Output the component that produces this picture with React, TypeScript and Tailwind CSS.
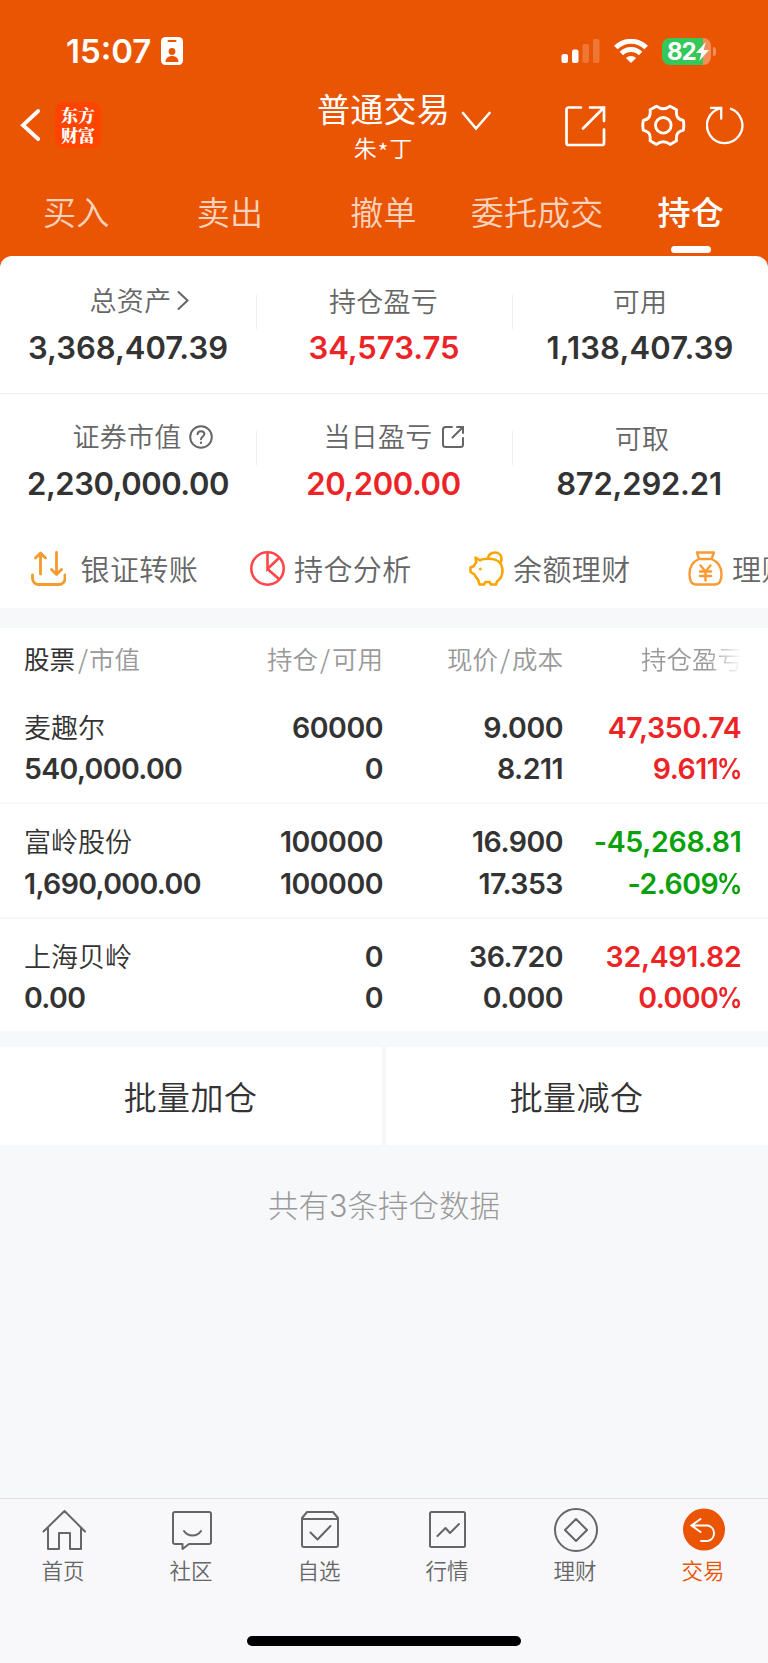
import type { ReactNode } from "react";
import clsx from "clsx";

const tabs = ["买入", "卖出", "撤单", "委托成交", "持仓"];

type Holding = {
  name: string;
  value: string;
  amount: string;
  available: string;
  price: string;
  cost: string;
  profit: string;
  rate: string;
  down?: boolean;
};

const holdings: Holding[] = [
  { name: "麦趣尔", value: "540,000.00", amount: "60000", available: "0", price: "9.000", cost: "8.211", profit: "47,350.74", rate: "9.611" },
  { name: "富岭股份", value: "1,690,000.00", amount: "100000", available: "100000", price: "16.900", cost: "17.353", profit: "-45,268.81", rate: "-2.609", down: true },
  { name: "上海贝岭", value: "0.00", amount: "0", available: "0", price: "36.720", cost: "0.000", profit: "32,491.82", rate: "0.000" },
];

function StatusBar() {
  return (
    <div className="flex h-[88px] items-start pt-[31px]">
      <div className="ml-[66px] w-[95px] font-['Inter'] text-[33px] leading-[41px] font-semibold">15:07</div>
      <svg width="22" height="28" viewBox="0 0 22 28" className="mt-[6px]">
        <rect width="22" height="28" rx="4.5" fill="#fff" />
        <rect x="6.5" y="3" width="9" height="2" rx="1" fill="#ea5504" />
        <circle cx="11" cy="14.5" r="3.4" fill="#ea5504" />
        <path d="M4.5 25c0-4 3-6 6.500-6s6.500 2 6.500 6z" fill="#ea5504" />
      </svg>
      <svg width="39" height="25" viewBox="0 0 39 25" fill="#fff" className="mt-[8px] ml-[378px]">
        <rect x="0.500" y="15" width="6.500" height="9" rx="2" />
        <rect x="11" y="10.500" width="6.500" height="13.500" rx="2" />
        <rect x="21.500" y="5" width="6.500" height="19" rx="2" opacity="0.2" />
        <rect x="32" y="0" width="6.500" height="24" rx="2" opacity="0.2" />
      </svg>
      <svg width="34" height="25" viewBox="0 0 34 25" className="mt-[8px] ml-[14px]" fill="none" stroke="#fff" strokeWidth="5">
        <path d="M1.800 8.600a21.500 21.500 0 0 1 30.400 0" />
        <path d="M7.400 14.600a13.500 13.500 0 0 1 19.200 0" />
        <path d="M11.900 19a7.300 7.300 0 0 1 10.200 0L17 24z" fill="#fff" stroke="none" />
      </svg>
      <div className="mt-[6.5px] ml-[14px] flex items-center">
        <div className="flex h-[27px] w-[49px] items-center rounded-[8px] bg-[linear-gradient(90deg,#34c759_84%,#f28f58_84%)] pl-[5px]">
          <span className="font-['Inter'] text-[24px] leading-[27px] font-bold tracking-[-1px]">82</span>
          <svg width="13" height="19" viewBox="0 0 12 18" preserveAspectRatio="none">
            <path d="M9 0L0 10.500h5L3 18 12 7.500H7z" fill="#fff" />
          </svg>
        </div>
        <div className="ml-[2px] h-[9px] w-[3px] rounded-r-full bg-[#f28f58]" />
      </div>
    </div>
  );
}

function NavBar() {
  return (
    <div className="flex h-[76px]">
      <div className="flex w-[304px] items-start pl-[20px]">
        <svg width="22" height="36" viewBox="0 0 22 36" fill="none" stroke="#fff" strokeWidth="3.800" strokeLinecap="round" className="mt-[19px]">
          <path d="M18.200 4L3 18.200 18.200 32" />
        </svg>
        <div className="mt-[14px] ml-[13px] h-[46px] w-[46px] rounded-[9px] bg-[#ff4400] pt-[3px] text-center font-['Noto_Serif_CJK_SC','Noto_Sans_CJK_SC',serif] text-[17px] leading-[20px] font-black">
          东方
          <br />
          财富
        </div>
      </div>
      <div className="w-[157px] text-center">
        <div className="pl-[2px] text-[33px] leading-[40px] tracking-[0.2px]">普通交易</div>
        <div className="-mt-px pl-px text-[23px] leading-[40px] font-[350]">
          朱<span className="relative top-[4px] mx-px">*</span>丁
        </div>
      </div>
      <svg width="30" height="22" viewBox="0 0 30 22" fill="none" stroke="#fff" strokeWidth="2.600" strokeLinecap="round" className="mt-[22px]">
        <path d="M2 3l13 15.500L28.500 3" />
      </svg>
      <svg width="43" height="42" viewBox="0 0 43 42" fill="none" stroke="#fff" strokeWidth="2.700" className="mt-[17px] ml-[72.5px]">
        <path d="M17 2.500H4.500a2 2 0 0 0-2 2V38a2 2 0 0 0 2 2H38a2 2 0 0 0 2-2V24.500M26 2.500h14V16M40 2.500L19 23.500" strokeLinecap="round" />
      </svg>
      <svg width="45" height="44" viewBox="0 0 45 44" fill="none" stroke="#fff" strokeWidth="2.900" strokeLinejoin="round" className="mt-[16px] ml-[34.5px]">
        <path d="M15.500 2.200Q22.300 7.500 29.100 2.200L35.500 5.800C34.800 12.500 36.500 15 42.300 16.500Q43.300 21.300 42.300 26.100C36.500 27.600 34.800 30.100 35.500 36.800L29.100 40.400Q22.300 35.100 15.500 40.400L9.100 36.800C9.800 30.100 8.100 27.600 2.300 26.100Q1.300 21.300 2.300 16.500C8.100 15 9.800 12.500 9.100 5.800Z" />
        <circle cx="22.300" cy="21.300" r="7.800" />
      </svg>
      <svg width="40" height="42" viewBox="0 0 40 42" fill="none" stroke="#fff" strokeWidth="2.300" className="mt-[16px] ml-[20px]">
        <path d="M24 4.500a17.700 17.700 0 1 1-10-0.200M4 3.800h11.200V15.500" />
      </svg>
    </div>
  );
}

function Tabs() {
  return (
    <div className="grid h-[92px] grid-cols-5 pt-[27px]">
      {tabs.map((tab) => {
        const active = tab === "持仓";
        return (
          <div key={tab} className="flex flex-col items-center">
            <span className={clsx("pr-px text-[33px] leading-[40px] tracking-[0.2px] whitespace-nowrap", active ? "font-medium" : "font-[350] text-[#fbd3bc]")}>{tab}</span>
            {active && <span className="mt-[15px] h-[7px] w-[40px] rounded-full bg-white" />}
          </div>
        );
      })}
    </div>
  );
}

type StatProps = {
  label: string;
  value: string;
  red?: boolean;
  icon?: ReactNode;
  labelClass?: string;
  valueClass?: string;
};

function Stat({ label, value, red, icon, labelClass, valueClass }: StatProps) {
  return (
    <div className="w-[256px] text-center">
      <div className={clsx("flex h-[36px] items-center justify-center text-[27px] leading-[36px] font-[350] tracking-[0.3px] text-[#666]", labelClass)}>
        {label}
        {icon}
      </div>
      <div className={clsx("mt-[11px] font-['Inter'] text-[31px] leading-[38px] font-semibold", red ? "text-[#ec2426]" : "text-[#333]", valueClass)}>{value}</div>
    </div>
  );
}

function Divider() {
  return <div className="mt-[13px] -mr-px h-[34px] w-px shrink-0 bg-[#eee]" />;
}

function Summary() {
  return (
    <div className="h-[352px] overflow-hidden rounded-t-[12px] bg-white">
      <div className="flex h-[138px] border-b border-[#f0f0f0] pt-[26px]">
        <Stat
          label="总资产"
          value="3,368,407.39"
          labelClass="pl-[24px]"
          icon={
            <svg width="14" height="22" viewBox="0 0 14 22" fill="none" stroke="#666" strokeWidth="2" strokeLinecap="round" className="ml-[5px]">
              <path d="M2.500 3l9 8.500-9 8.500" />
            </svg>
          }
        />
        <Divider />
        <Stat label="持仓盈亏" value="34,573.75" red labelClass="relative top-px pr-px" />
        <Divider />
        <Stat label="可用" value="1,138,407.39" labelClass="relative top-px" valueClass="tracking-[0.15px]" />
      </div>
      <div className="flex h-[138px] pt-[24px]">
        <Stat
          label="证券市值"
          value="2,230,000.00"
          labelClass="pl-[29px]"
          valueClass="tracking-[-0.45px]"
          icon={
            <svg width="24" height="24" viewBox="0 0 24 24" fill="none" stroke="#666" strokeWidth="2" strokeLinecap="round" className="mt-px ml-[7px]">
              <circle cx="12" cy="12" r="10.800" />
              <path d="M8.600 9.300c.1-2 1.500-3.100 3.400-3.100s3.400 1.200 3.400 2.900c0 2.300-3.400 2.500-3.400 5.100" />
              <path d="M12 17.600v.2" strokeWidth="2.400" />
            </svg>
          }
        />
        <Divider />
        <Stat
          label="当日盈亏"
          value="20,200.00"
          red
          labelClass="pl-[20px]"
          valueClass="pr-px tracking-[-0.4px]"
          icon={
            <svg width="24" height="24" viewBox="0 0 24 24" fill="none" stroke="#666" strokeWidth="2" strokeLinecap="round" className="mt-px ml-[8px]">
              <path d="M11 2H4.500A2.500 2.500 0 0 0 2 4.500v15A2.500 2.500 0 0 0 4.500 22h15a2.500 2.500 0 0 0 2.500-2.500V13M16 2h6v6M22 2L11.500 12.500" />
            </svg>
          }
        />
        <Divider />
        <Stat label="可取" value="872,292.21" labelClass="relative top-[2px] pl-[4px]" valueClass="pr-[2px] tracking-[-0.2px]" />
      </div>
      <div className="flex h-[76px] gap-[14px] pl-[30.5px] text-[29px] leading-[72px] font-[350] tracking-[0.4px] whitespace-nowrap text-[#666]">
        <Shortcut label="银证转账" wide>
          <g stroke="#f59a2c" strokeWidth="2.800" strokeLinecap="round" strokeLinejoin="round">
            <path d="M1.500 24v3.500a6 6 0 0 0 6 6h20.500a6 6 0 0 0 6-6V24M9.500 23V2.500M4.500 7l5-5 5 5M25.500 1.500V23M20.500 18.500l5 5 5-5" />
          </g>
        </Shortcut>
        <Shortcut label="持仓分析">
          <g stroke="#ff4648" strokeWidth="2.600">
            <circle cx="17.500" cy="17.500" r="16.200" />
            <path d="M17.500 1.500V18L29.500 6.500M17.500 18L29.500 28.500" />
          </g>
        </Shortcut>
        <Shortcut label="余额理财">
          <g stroke="#fba500" strokeWidth="2.600" strokeLinejoin="round">
            <path d="M6.500 6.500l4.500 2.800C13 8 16 7.800 20 7.800c9 0 13.500 5.200 13.500 12.200 0 5-2 8-5.500 10.500L27 33.500h-5l-1.500-2.500h-4L15 33.500h-4.500L9 28.500C7.500 27 6.500 25.500 5.500 23.500L1.500 21v-4.500L5 15c.5-1.500 1-2.500 2.300-3.500z" />
            <path d="M18.500 8c1-4 4-6.500 7.500-6.500 4 0 6.500 3 6.500 6.500 0 2-1 3.500-2.500 4.500" />
            <circle cx="11.300" cy="18" r="1" fill="#fba500" strokeWidth="1" />
          </g>
        </Shortcut>
        <Shortcut label="理财产品">
          <g stroke="#f99a34" strokeWidth="2.400" strokeLinejoin="round" strokeLinecap="round">
            <path d="M11 8L9 1.500h17L23.500 8zM11 8C5 10.500 1.500 16 1.500 23c0 7 2 10.500 6.500 10.500h19c4.500 0 6.500-3.500 6.500-10.500 0-7-4-12.500-10-15" />
            <path d="M12.500 14.500l5 6 5-6M17.500 20.500v9M12 20.500h11M12 25h11" />
          </g>
        </Shortcut>
      </div>
    </div>
  );
}

function Shortcut({ label, wide, children }: { label: string; wide?: boolean; children: ReactNode }) {
  return (
    <div className="flex w-[205px] shrink-0">
      <svg width="35" height="35" viewBox="0 0 35 35" fill="none" className={clsx("mt-[19px] shrink-0", wide ? "mr-[15px]" : "mr-[9.5px]")}>
        {children}
      </svg>
      {label}
    </div>
  );
}

function Holdings() {
  const columns = "grid grid-cols-[170px_189px_180px_179.5px] pl-[24px]";
  return (
    <div className="mt-[20px] bg-white text-[#333]">
      <div className={clsx(columns, "h-[61.5px] pt-[10px] text-[25.5px] leading-[40px] font-[350] whitespace-nowrap text-[#999]")}>
        <div>
          <span className="font-normal text-[#333]">股票</span>
          <span className="mr-[1px] ml-[3px]">/</span>市值
        </div>
        <div className="text-right">
          持仓<span className="mx-[2px]">/</span>可用
        </div>
        <div className="text-right">
          现价<span className="mx-[2px]">/</span>成本
        </div>
        <div className="ml-[78px] w-[101px] overflow-hidden bg-linear-to-r from-[#999] from-65% to-white bg-clip-text text-transparent">持仓盈亏</div>
      </div>
      {holdings.map((h) => (
        <div
          key={h.name}
          className={clsx(
            columns,
            "h-[114.5px] border-b-2 border-[#f8f8f9] pt-[17px] font-['Inter'] text-[28.5px] leading-[41.5px] font-semibold tracking-[-0.5px]",
            "last:h-[112px] last:border-b-0",
          )}
        >
          <div>
            <div className="relative -top-px font-['Noto_Sans_CJK_SC',sans-serif] text-[27px] font-[350] tracking-normal">{h.name}</div>
            <div className="tracking-[-0.65px]">{h.value}</div>
          </div>
          <div className="text-right">
            <div>{h.amount}</div>
            <div>{h.available}</div>
          </div>
          <div className="text-right">
            <div>{h.price}</div>
            <div>{h.cost}</div>
          </div>
          <div className={clsx("text-right", h.down ? "text-[#09a109]" : "text-[#ec2426]")}>
            <div className="pr-px tracking-[-0.3px]">{h.profit}</div>
            <div>
              {h.rate}
              <span className="-ml-[4px] inline-block origin-right scale-x-90">%</span>
            </div>
          </div>
        </div>
      ))}
    </div>
  );
}

function NavItem({ label, active, children }: { label: string; active?: boolean; children: ReactNode }) {
  return (
    <div className={clsx("flex flex-1 flex-col items-center text-[21.5px] leading-[30px] font-[350]", active ? "text-[#ea5504]" : "text-[#666]")}>
      <svg width="46" height="46" viewBox="0 0 46 46" fill="none" stroke="currentColor" strokeWidth="2" strokeLinejoin="round" strokeLinecap="round">
        {children}
      </svg>
      <span className="mt-[2px] mr-[2px]">{label}</span>
    </div>
  );
}

function BottomNav() {
  return (
    <div className="h-[165px] border-t border-[#dedee0] bg-[#f8f8fb]">
      <div className="flex pt-[8px]">
        <NavItem label="首页">
          <path d="M2.500 24.500L23.500 4 44 24.500M7 20.500V42h11V26h11v16h11V20.500" />
        </NavItem>
        <NavItem label="社区">
          <path d="M6 5h34a2 2 0 0 1 2 2v28a2 2 0 0 1-2 2H20l-6.500 5v-5H6a2 2 0 0 1-2-2V7a2 2 0 0 1 2-2zM15 24c4 6 13 6 17 0" />
        </NavItem>
        <NavItem label="自选">
          <path d="M5 11l5-6h26l5 6M5 12h36v26a2 2 0 0 1-2 2H7a2 2 0 0 1-2-2zM13.500 25.500l7 7L33.500 19" />
        </NavItem>
        <NavItem label="行情">
          <rect x="5" y="5" width="35" height="35" rx="1.500" />
          <path d="M12.500 29l8-8 4.500 5 9-9" />
        </NavItem>
        <NavItem label="理财">
          <circle cx="23" cy="23" r="21" />
          <path d="M23 12l11 11-11 11-11-11z" />
        </NavItem>
        <NavItem label="交易" active>
          <circle cx="23" cy="22.500" r="21" fill="#ea5504" stroke="none" />
          <path d="M19.500 12L10.500 18.500l9 6.500M11 18.500h16a8 8 0 0 1 0 15.500h-7" stroke="#fff" strokeWidth="2" strokeLinejoin="miter" />
        </NavItem>
      </div>
      <div className="mx-auto mt-[51px] h-[10px] w-[274px] rounded-full bg-black" />
    </div>
  );
}

function App() {
  return (
    <div className="flex h-[1663px] w-[768px] flex-col overflow-hidden bg-[#f7f8fa] font-['Noto_Sans_CJK_SC',sans-serif]">
      <header className="h-[270px] shrink-0 bg-[#ea5504] text-white">
        <StatusBar />
        <NavBar />
        <Tabs />
      </header>
      <main className="-mt-[14px] flex-1">
        <Summary />
        <Holdings />
        <div className="mt-[16px] grid grid-cols-2 gap-[4px] text-center text-[33px] leading-[98px] font-[350] tracking-[0.4px] text-[#333]">
          <div className="bg-white pr-px">批量加仓</div>
          <div className="bg-white pr-px">批量减仓</div>
        </div>
        <p className="mt-[39px] text-center text-[30.5px] leading-[40px] font-light text-[#999]">
          共有<span className="font-['Inter']">3</span>条持仓数据
        </p>
      </main>
      <BottomNav />
    </div>
  );
}

export default App;
